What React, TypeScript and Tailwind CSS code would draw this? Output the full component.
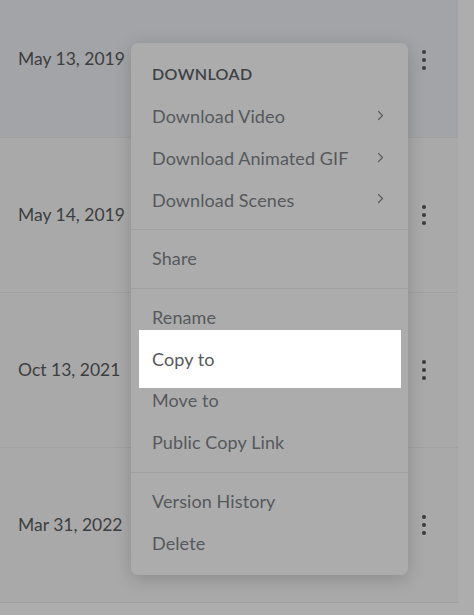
import React from "react";

const rows = ["May 13, 2019", "May 14, 2019", "Oct 13, 2021", "Mar 31, 2022"];

type Item = { label: string; sub?: boolean; active?: boolean };

const groups: Item[][] = [
  [
    { label: "Download Video", sub: true },
    { label: "Download Animated GIF", sub: true },
    { label: "Download Scenes", sub: true },
  ],
  [{ label: "Share" }],
  [
    { label: "Rename" },
    { label: "Copy to", active: true },
    { label: "Move to" },
    { label: "Public Copy Link" },
  ],
  [{ label: "Version History" }, { label: "Delete" }],
];

function Kebab() {
  return (
    <span className="flex flex-col items-center gap-[4px]">
      <span className="w-[4px] h-[4px] rounded-full bg-[#3b3c3e]" />
      <span className="w-[4px] h-[4px] rounded-full bg-[#3b3c3e]" />
      <span className="w-[4px] h-[4px] rounded-full bg-[#3b3c3e]" />
    </span>
  );
}

function Chevron() {
  return (
    <svg width="7" height="11" viewBox="0 0 7 11" fill="none">
      <path d="M1.5 1.5L5.5 5.5L1.5 9.5" stroke="#5a5c5f" strokeWidth="1.2" strokeLinecap="round" strokeLinejoin="round" />
    </svg>
  );
}

function Menu() {
  return (
    <div className="absolute left-[131px] top-[43px] w-[277px] rounded-[7px] bg-[#acacac] shadow-[0_4px_18px_rgba(0,0,0,0.18)] pt-[18px] pb-[3px]">
      <div className="px-[21px] h-[26px] mb-[8px] flex items-center text-[16px] font-semibold tracking-[0.4px] text-[#3e4145]">
        DOWNLOAD
      </div>
      {groups.map((g, gi) => (
        <div
          key={gi}
          className={
            gi === 0
              ? "pt-[1px] pb-[8px]"
              : "border-t border-[#a0a0a0] py-[8px]"
          }
        >
          {g.map((it) => (
            <div key={it.label} className="relative h-[41.7px] flex items-center px-[21px]">
              {it.active && <span className="absolute left-[8px] right-[7px] -top-[8px] -bottom-[8px] bg-white" />}
              <span className="relative text-[18px] text-[#56595c] tracking-[0.1px]">{it.label}</span>
              {it.sub && (
                <span className="absolute right-[24px] top-[14px]">
                  <Chevron />
                </span>
              )}
            </div>
          ))}
        </div>
      ))}
    </div>
  );
}

export default function App() {
  return (
    <div
      className="relative w-[474px] h-[615px] overflow-hidden bg-[#adadad]"
      style={{ fontFamily: "Lato, 'Open Sans', sans-serif" }}
    >
      <div className="w-[458px] -mt-[18px] border-b border-[#a0a0a0]">
        {rows.map((d, i) => (
          <div
            key={d}
            className={
              "h-[155px] flex items-center justify-between pl-[18px] pr-[32px] " +
              (i === 0 ? "bg-[#a3a4a7]" : "bg-[#a9a9a9] border-t border-[#a0a0a0]")
            }
          >
            <span className="text-[17.5px] text-[#3d3e40]">{d}</span>
            <Kebab />
          </div>
        ))}
      </div>
      <Menu />
    </div>
  );
}
